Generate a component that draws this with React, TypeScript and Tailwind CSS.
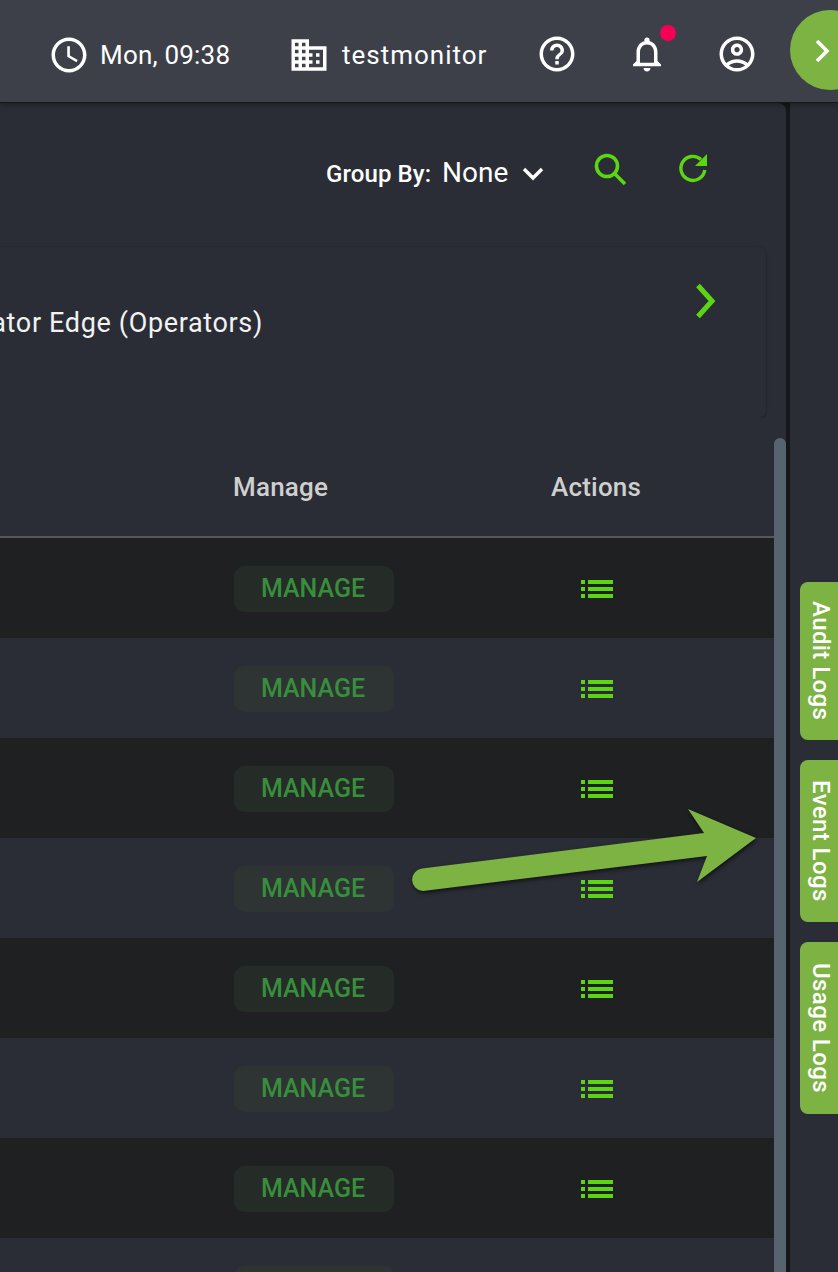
import React from "react";

const G = "#5cd612";
const rows = [0, 1, 2, 3, 4, 5, 6, 7];

function MuiIcon({ d, className = "" }: { d: string[]; className?: string }) {
  return (
    <svg viewBox="0 0 24 24" className={"w-[42px] h-[42px] shrink-0 " + className} fill="currentColor">
      {d.map((p) => (
        <path key={p} d={p} />
      ))}
    </svg>
  );
}

function ListIcon() {
  return (
    <svg width="32" height="18" viewBox="0 0 32 18" fill={G}>
      <rect x="0" y="0" width="4" height="4" />
      <rect x="0" y="7" width="4" height="4" />
      <rect x="0" y="14" width="4" height="4" />
      <rect x="7" y="0" width="25" height="4" />
      <rect x="7" y="7" width="25" height="4" />
      <rect x="7" y="14" width="25" height="4" />
    </svg>
  );
}

function SideTab({ label, h }: { label: string; h: string }) {
  return (
    <div className={"w-[38px] rounded-l-lg bg-[#7cb342] flex items-center justify-center " + h}>
      <span className="[writing-mode:vertical-rl] text-[24px] leading-[28px] font-medium text-white tracking-[0.4px] whitespace-nowrap ml-[4px]">
        {label}
      </span>
    </div>
  );
}

export default function App() {
  return (
    <div className="relative w-[838px] h-[1272px] overflow-hidden flex flex-col bg-[#16171b] font-['Roboto',sans-serif] text-white">
      <header className="relative z-10 h-[103px] shrink-0 flex items-center pl-[48px] bg-[#3d4049] border-b border-[#16171b] overflow-hidden shadow-[0_2px_6px_rgba(0,0,0,0.3)]">
        <MuiIcon
          className="mt-[7px]"
          d={[
            "M11.99 2C6.47 2 2 6.48 2 12s4.47 10 9.99 10C17.52 22 22 17.52 22 12S17.52 2 11.99 2zM12 20c-4.42 0-8-3.58-8-8s3.58-8 8-8 8 3.58 8 8-3.58 8-8 8z",
            "M12.5 7H11v6l5.25 3.15.75-1.23-4.5-2.67z",
          ]}
        />
        <span className="ml-[10px] w-[188px] shrink-0 text-[26px] leading-[32px] mt-[7px] tracking-[0.2px] whitespace-nowrap">Mon, 09:38</span>
        <MuiIcon
          className="mt-[7px]"
          d={[
            "M12 7V3H2v18h20V7H12zM6 19H4v-2h2v2zm0-4H4v-2h2v2zm0-4H4V9h2v2zm0-4H4V5h2v2zm4 12H8v-2h2v2zm0-4H8v-2h2v2zm0-4H8V9h2v2zm0-4H8V5h2v2zm10 12h-8v-2h2v-2h-2v-2h2v-2h-2V9h8v10zm-2-8h-2v2h2v-2zm0 4h-2v2h2v-2z",
          ]}
        />
        <span className="ml-[12px] w-[194px] shrink-0 text-[26px] leading-[32px] mt-[7px] tracking-[1px] whitespace-nowrap">testmonitor</span>
        <MuiIcon
          className="mt-[5px]"
          d={[
            "M11 18h2v-2h-2v2zm1-16C6.48 2 2 6.48 2 12s4.48 10 10 10 10-4.48 10-10S17.52 2 12 2zm0 18c-4.41 0-8-3.59-8-8s3.59-8 8-8 8 3.59 8 8-3.59 8-8 8zm0-14c-2.21 0-4 1.79-4 4h2c0-1.1.9-2 2-2s2 .9 2 2c0 2-3 1.75-3 5h2c0-2.25 3-2.5 3-5 0-2.21-1.79-4-4-4z",
          ]}
        />
        <div className="relative ml-[48px] w-[42px] h-[42px] shrink-0 mt-[5px]">
          <MuiIcon
            d={[
              "M12 22c1.1 0 2-.9 2-2h-4c0 1.1.9 2 2 2zm6-6v-5c0-3.07-1.63-5.64-4.5-6.32V4c0-.83-.67-1.5-1.5-1.5s-1.5.67-1.5 1.5v.68C7.64 5.36 6 7.92 6 11v5l-2 2v1h16v-1l-2-2zm-2 1H8v-6c0-2.48 1.51-4.5 4-4.5s4 2.02 4 4.5v6z",
            ]}
          />
          <span className="absolute left-[34px] -top-[8px] w-[16px] h-[16px] rounded-full bg-[#f50057]" />
        </div>
        <MuiIcon
          className="ml-[48px] mt-[5px]"
          d={[
            "M12 2C6.48 2 2 6.48 2 12s4.48 10 10 10 10-4.48 10-10S17.52 2 12 2zM7.35 18.5C8.66 17.56 10.26 17 12 17s3.34.56 4.65 1.5C15.34 19.44 13.74 20 12 20s-3.34-.56-4.65-1.5zm10.79-1.38C16.45 15.8 14.32 15 12 15s-4.45.8-6.14 2.12C4.7 15.73 4 13.95 4 12c0-4.42 3.58-8 8-8s8 3.58 8 8c0 1.95-.7 3.73-1.86 5.12z",
            "M12 6c-1.93 0-3.5 1.57-3.5 3.5S10.07 13 12 13s3.5-1.57 3.5-3.5S13.93 6 12 6zm0 5c-.83 0-1.5-.67-1.5-1.5S11.17 8 12 8s1.5.67 1.5 1.5S12.83 11 12 11z",
          ]}
        />
        <div className="ml-[32px] w-[80px] h-[80px] shrink-0 rounded-full bg-[#7cb342] flex items-center pl-[23px] -mt-[3px]">
          <svg className="mt-[2px]" width="18" height="24" viewBox="0 0 18 24" fill="none" stroke="white" strokeWidth="3.6">
            <path d="M4 2 L14 12 L4 22" />
          </svg>
        </div>
      </header>

      <div className="flex-1 flex min-h-0">
        <main className="w-[786px] shrink-0 flex flex-col">
          <section className="h-[144px] shrink-0 bg-[#2a2d35] rounded-tr-lg flex items-start pl-[326px] pt-[53px]">
            <span className="text-[24px] leading-[36px] font-medium tracking-[0.1px]">Group By:</span>
            <span className="ml-[11px] text-[28px] leading-[34px]">None</span>
            <svg className="ml-[14px] mt-[11px]" width="22" height="14" viewBox="0 0 22 14" fill="none" stroke="white" strokeWidth="3.4">
              <path d="M2 2 L11 11 L20 2" />
            </svg>
            <svg className="ml-[50px] -mt-[3px]" width="34" height="34" viewBox="0 0 34 34" fill="none" stroke={G} strokeWidth="3.6">
              <circle cx="13" cy="13" r="10.5" />
              <path d="M20.5 20.5 L31 31" />
            </svg>
            <svg className="ml-[49px] -mt-[3px]" width="32" height="32" viewBox="0 0 32 32" fill="none">
              <path d="M24 6.5 A12 12 0 1 0 27.8 17" stroke={G} strokeWidth="3.4" />
              <path d="M30 1 V13 H18 Z" fill={G} />
            </svg>
          </section>
          <section className="bg-[#2a2d35] shrink-0 pr-[20px] h-[171px]">
            <div className="h-full rounded-r-lg bg-[#2a2d35] shadow-[0_1px_3px_rgba(0,0,0,0.35)] flex items-center">
              <div className="w-[263px] shrink-0 flex justify-end -mt-[20px]">
                <span className="text-[27px] leading-[32px] whitespace-nowrap tracking-[0.65px] text-[#f2f2f2] shrink-0">
                  ator Edge (Operators)
                </span>
              </div>
              <svg className="ml-[432px] -mt-[64px]" width="24" height="36" viewBox="0 0 24 36" fill="none" stroke={G} strokeWidth="5">
                <path d="M3 2.5 L17 18 L3 33.5" />
              </svg>
            </div>
          </section>
          <section className="flex-1 min-h-0 flex bg-[#2a2d35]">
            <div className="w-[774px] shrink-0 overflow-hidden">
              <div className="h-[120px] border-b-2 border-[#55575b] flex items-start pl-[233px] pt-[51px] text-[26px] leading-[36px] font-medium tracking-[0.2px] text-[#cfcfcf]">
                <span className="w-[318px]">Manage</span>
                <span className="w-[88px] text-center">Actions</span>
              </div>
              {rows.map((i) => (
                <div
                  key={i}
                  className={
                    "h-[100px] flex items-center pl-[234px] " + (i % 2 === 0 ? "bg-[#1f2022]" : "bg-[#2a2d35]")
                  }
                >
                  <div className="w-[318px]">
                    <div
                      className={
                        "w-[160px] h-[46px] rounded-[10px] flex items-center justify-center pr-[2px] text-[25px] font-medium leading-[30px] mt-[1px] text-[#388e3c] " +
                        (i % 2 === 0 ? "bg-[#252b26]" : "bg-[#2e3333]")
                      }
                    >
                      {i < 7 ? "MANAGE" : null}
                    </div>
                  </div>
                  <div className="w-[90px] flex justify-center mt-[2px]">
                    <ListIcon />
                  </div>
                </div>
              ))}
            </div>
            <div className="flex-1 pt-[20px]">
              <div className="h-full rounded-t-lg bg-[#566470]" />
            </div>
          </section>
        </main>
        <div className="w-[4px] shrink-0" />
        <aside className="flex-1 bg-[#2a2d35] flex flex-col items-end gap-[20px] pt-[479px]">
          <SideTab label="Audit Logs" h="h-[158px]" />
          <SideTab label="Event Logs" h="h-[162px]" />
          <SideTab label="Usage Logs" h="h-[172px]" />
        </aside>
      </div>

      <svg
        className="absolute z-20 left-[400px] top-[800px] drop-shadow-[1px_2px_2px_rgba(0,0,0,0.6)]"
        width="370"
        height="100"
        viewBox="0 0 370 100"
      >
        <path
          d="M22 68.5 L304 33 L288 9 L356 38 L297 82 L307 56 L23 91 A11.3 11.3 0 0 1 22 68.5 Z"
          fill="#7cb342"
        />
      </svg>
    </div>
  );
}
